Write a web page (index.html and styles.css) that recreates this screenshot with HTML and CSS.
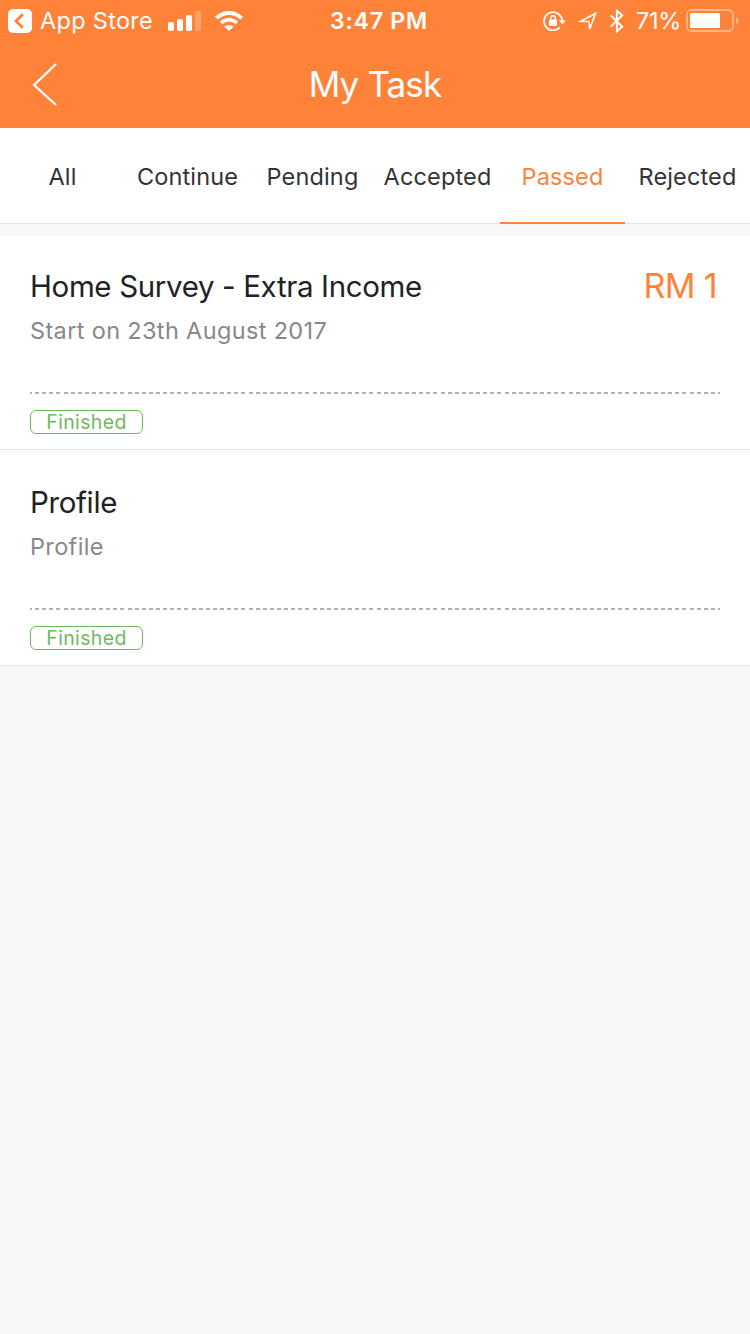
FILE: index.html
```html
<!DOCTYPE html>
<html lang="en">
<head>
  <meta charset="UTF-8">
  <meta name="viewport" content="width=device-width, initial-scale=1">
  <title>My Task</title>
  <link rel="stylesheet" href="styles.css">
</head>
<body>

  <header class="header">
    <div class="status-bar">
      <div class="status-left">
        <svg class="back-app" width="24" height="24" viewBox="0 0 24 24">
          <rect width="24" height="24" rx="5" fill="#fff"/>
          <path d="M14.8 5.2L8 12l6.8 6.8" fill="none" stroke="#ff8239" stroke-width="2.8"/>
        </svg>
        <span class="app-name">App Store</span>
        <svg class="signal" width="33" height="20" viewBox="0 0 33 20" fill="#fff">
          <rect x="0" y="11" width="6" height="9" rx="1.8"/>
          <rect x="9" y="8" width="6" height="12" rx="1.8"/>
          <rect x="18" y="4" width="6" height="16" rx="1.8"/>
          <rect x="27" y="0" width="6" height="20" rx="1.8" opacity=".25"/>
        </svg>
        <svg class="wifi" width="28" height="20" viewBox="0 0 28 20">
          <path d="M1.4 7.2C8.6 .2 19.4 .2 26.6 7.2" fill="none" stroke="#fff" stroke-width="3.9"/>
          <path d="M6 11.9c4.6-4.2 11.4-4.2 16 0" fill="none" stroke="#fff" stroke-width="3.6"/>
          <path d="M9.4 15.6c2.7-2.2 6.5-2.2 9.2 0L14 20z" fill="#fff"/>
        </svg>
      </div>
      <span class="time">3:47 PM</span>
      <div class="status-right">
        <svg class="lock" width="23" height="20" viewBox="0 0 23 20">
          <path d="M16.8 16.4A9.1 9.1 0 1 1 19.2 9.6" fill="none" stroke="#fff" stroke-width="1.8"/>
          <path d="M16 9.2h6.8l-3.4 4.4z" fill="#fff"/>
          <rect x="6" y="8.6" width="8" height="6.4" rx=".8" fill="#fff"/>
          <path d="M7.7 9.5V7a2.3 2.3 0 0 1 4.6 0v2.5" fill="none" stroke="#fff" stroke-width="1.4"/>
        </svg>
        <svg class="location" width="20" height="20" viewBox="0 0 20 20">
          <path d="M17.6 2.2L2.6 10.2l8.4.3.7 7.5z" fill="none" stroke="#fff" stroke-width="1.6"/>
        </svg>
        <svg class="bluetooth" width="14" height="24" viewBox="0 0 14 24">
          <path d="M.8 6.4l11.4 11.3-5.3 4.5V1.8l5.3 4.5L.8 17.6" fill="none" stroke="#fff" stroke-width="2"/>
        </svg>
        <span class="percent">71%</span>
        <svg class="battery" width="54" height="23" viewBox="0 0 54 23">
          <rect x="1" y="1" width="46" height="21" rx="4.5" fill="none" stroke="#fff" stroke-width="1.8" opacity=".42"/>
          <rect x="4" y="4" width="30" height="15" rx="1" fill="#fff"/>
          <path d="M50 8c3.6 1.5 3.6 6 0 7.5z" fill="#fff" opacity=".42"/>
        </svg>
      </div>
    </div>

    <div class="nav-bar">
      <svg class="back" width="26" height="44" viewBox="0 0 26 44">
        <path d="M24 2L2.2 23 24 43" fill="none" stroke="#fff" stroke-width="2.3"/>
      </svg>
      <h1>My Task</h1>
    </div>
  </header>

  <nav class="tabs">
    <a class="tab">All</a>
    <a class="tab">Continue</a>
    <a class="tab">Pending</a>
    <a class="tab">Accepted</a>
    <a class="tab active">Passed</a>
    <a class="tab">Rejected</a>
  </nav>

  <main class="task-list">
    <section class="task">
      <div class="task-info">
        <div>
          <h2>Home Survey - Extra Income</h2>
          <p>Start on 23th August 2017</p>
        </div>
        <span class="price">RM 1</span>
      </div>
      <div class="dashes"></div>
      <span class="badge">Finished</span>
    </section>

    <section class="task">
      <div class="task-info">
        <div>
          <h2>Profile</h2>
          <p>Profile</p>
        </div>
      </div>
      <div class="dashes"></div>
      <span class="badge">Finished</span>
    </section>
  </main>

</body>
</html>
```

FILE: styles.css
```css
* {
  box-sizing: border-box;
}
body {
  margin: 0;
  min-height: 1334px;
  background-color: #f7f7f7;
  font-family: Inter, "Liberation Sans", sans-serif;
  color: #333;
}
h1, h2, p {
  margin: 0;
  font-weight: 400;
}
svg {
  display: block;
  flex: none;
}

/* header */
.header {
  height: 128px;
  background-color: #ff8239;
  color: #fff;
}
.status-bar {
  display: flex;
  height: 41px;
  padding: 0 10px 0 8px;
  font-size: 23.5px;
  line-height: 41px;
  white-space: nowrap;
}
.status-left,
.status-right {
  display: flex;
  align-items: center;
}
.status-left {
  width: 322px;
}
.status-right {
  margin-left: auto;
}
.app-name {
  width: 120px;
  margin-left: 8px;
  letter-spacing: 0.3px;
}
.signal {
  margin-left: 8px;
}
.wifi {
  margin-left: 14px;
}
.time {
  font-weight: 600;
  font-size: 23px;
  line-height: 42px;
  letter-spacing: 0.8px;
}
.location {
  margin-left: 12px;
}
.bluetooth {
  margin-left: 12px;
}
.percent {
  width: 44px;
  margin-left: 12px;
  letter-spacing: -0.3px;
}
.battery {
  margin-left: 6px;
}
.nav-bar {
  display: grid;
  grid-template-columns: 100px 1fr 100px;
  height: 87px;
}
.back {
  margin: 21px 0 0 32px;
}
h1 {
  font-size: 35px;
  line-height: 86px;
  text-align: center;
  letter-spacing: -0.85px;
}

/* tabs */
.tabs {
  display: grid;
  grid-template-columns: repeat(6, 1fr);
  height: 96px;
  background-color: #fff;
  box-shadow: inset 0 -1px #e5e5e5;
}
.tab {
  font-size: 23.5px;
  line-height: 98px;
  height: 96px;
  text-align: center;
  white-space: nowrap;
  letter-spacing: 0.15px;
}
.tab.active {
  color: #ff8239;
  border-bottom: 2px solid #ff8239;
}

/* tasks */
.task-list {
  display: flex;
  flex-direction: column;
  gap: 2px;
  padding-top: 12px;
}
.task {
  height: 214px;
  padding: 0 30px;
  background-color: #fff;
  border-bottom: 1px solid #e5e5e5;
}
.task-info {
  display: flex;
  justify-content: space-between;
  height: 156px;
  padding-top: 29px;
}
h2 {
  font-size: 29.5px;
  line-height: 42px;
  color: #222;
  letter-spacing: -0.36px;
}
.task-info p {
  margin-top: 7px;
  font-size: 23.5px;
  line-height: 34px;
  color: #888;
  letter-spacing: 0.35px;
}
.price {
  margin-right: 3px;
  font-size: 34px;
  line-height: 41px;
  color: #ff8239;
  letter-spacing: -0.6px;
}
.dashes {
  height: 2px;
  background: repeating-linear-gradient(to right, #b2b2b2 0 2px, transparent 2px 5.11px, #b2b2b2 5.11px 7.113px);
}
.badge {
  display: block;
  width: 113px;
  height: 24px;
  margin-top: 16px;
  border: 1px solid #72b85c;
  border-radius: 6px;
  color: #72b85c;
  font-size: 19.5px;
  line-height: 23px;
  text-align: center;
  letter-spacing: 0.35px;
}
```
